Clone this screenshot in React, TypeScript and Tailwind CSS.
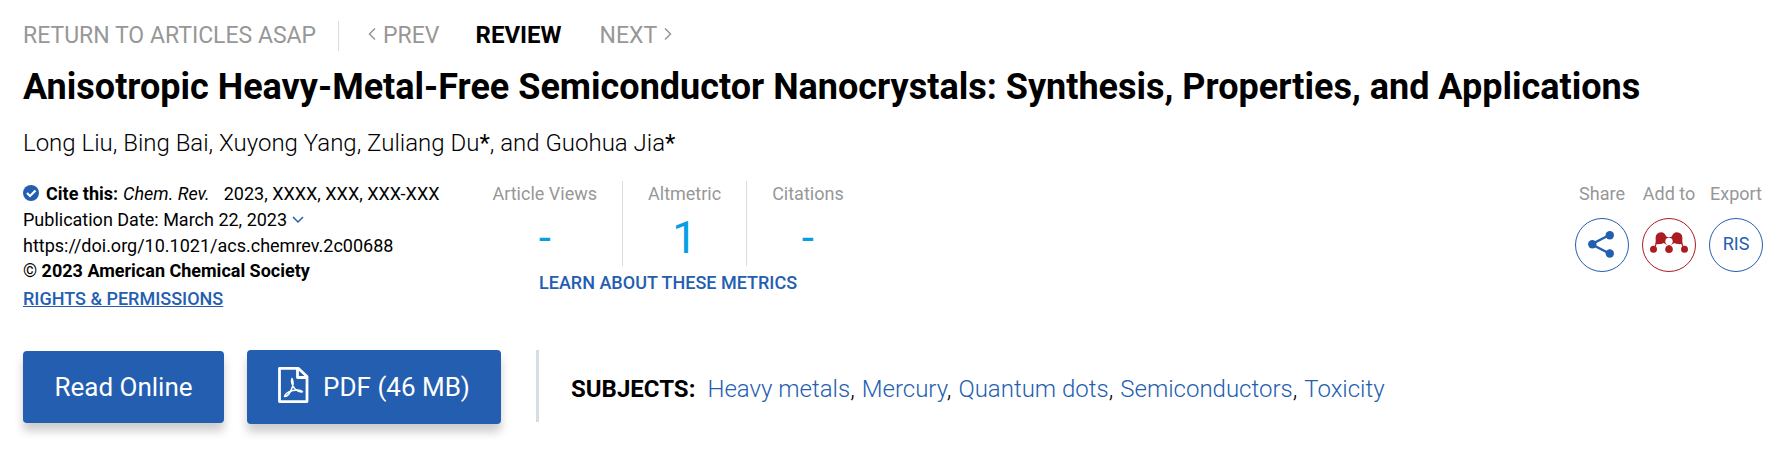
import type { ReactNode } from "react";

const subjects = ["Heavy metals", "Mercury", "Quantum dots", "Semiconductors", "Toxicity"];

const metrics = [
  { label: "Article Views", value: "-" },
  { label: "Altmetric", value: "1" },
  { label: "Citations", value: "-" },
];

function Chevron({ d, className }: { d: string; className: string }) {
  return (
    <svg viewBox="0 0 12 12" className={className} fill="none" stroke="currentColor" strokeWidth="1.5" aria-hidden="true">
      <path d={d} />
    </svg>
  );
}

function ShareIcon() {
  return (
    <svg viewBox="0 0 28 28" className="size-7" fill="currentColor" aria-hidden="true">
      <path d="M21.500 4 3.500 13.200l18 9.300" fill="none" stroke="currentColor" strokeWidth="2.400" />
      <circle cx="4.300" cy="13.200" r="4.200" />
      <circle cx="21.800" cy="4.300" r="4.200" />
      <circle cx="21.800" cy="22.500" r="4.200" />
    </svg>
  );
}

function MendeleyIcon() {
  return (
    <svg viewBox="0 0 38 22" className="mb-1 h-[22px] w-[38px]" fill="currentColor" aria-hidden="true">
      <path d="M8 8 3.500 17.500M30 8l4.500 9.500M19 10v8" fill="none" stroke="currentColor" strokeWidth="1.200" />
      <path d="M11 .2c2.800 0 4.300 1.700 5.200 4.200 1.800 1 3.800 1 5.600 0C22.700 1.900 24.200.2 27 .2a5.500 5.500 0 0 1 5.400 5.500c0 2.300-.4 3.800.4 6-2.500.8-6.300.6-8.300-.7L19 14l-5.500-3c-2 1.300-5.800 1.500-8.300.7.800-2.200.4-3.700.4-6A5.500 5.500 0 0 1 11 .2Z" />
      <circle cx="19" cy="9.500" r="3.700" fill="white" />
      <circle cx="3.500" cy="17.200" r="3.500" />
      <circle cx="19" cy="17.200" r="3.800" />
      <circle cx="34.500" cy="17.200" r="3.500" />
    </svg>
  );
}

function PdfIcon() {
  return (
    <svg viewBox="0 0 31 36" className="mb-1 h-9 w-[31px]" fill="none" stroke="currentColor" strokeWidth="2.800" strokeLinejoin="round" aria-hidden="true">
      <path d="M1.500 1.400h19l8.500 8v25.200h-27.500zM19.500 1.400v9.100h9.500" />
      <path d="M14 11.500c-1.300 2.500.300 7.500 2.800 10.300 2.400 2.400 5 3.500 7.700 3-1.500-1.800-5.500-2-9.500-1.200-4 .9-7.600 3.200-8.500 5.900 2.800.2 6-4.200 7.700-9 1.200-3.300 1-6.800-.2-9Z" strokeWidth="1.500" />
    </svg>
  );
}

function RoundAction({ label, className, children }: { label: string; className: string; children: ReactNode }) {
  return (
    <div className="flex flex-col items-center gap-[11px]">
      <span className="text-[#979797]">{label}</span>
      <button type="button" aria-label={label} className={`flex size-[54px] items-center justify-center rounded-full border ${className}`}>
        {children}
      </button>
    </div>
  );
}

export default function App() {
  return (
    <main className="bg-white pt-[21px] pr-[29px] pb-8 pl-[23px] font-['Roboto',sans-serif] text-black">
      <nav className="flex h-[30px] text-[23px] leading-[30px] text-[#979797]">
        <a href="#" className="border-r border-[#d5dfe3] pr-[22px]">RETURN TO ARTICLES ASAP</a>
        <a href="#" className="ml-[27px] flex gap-[5px]">
          <Chevron d="M9 .5 3.500 6 9 11.500" className="mt-[7px] size-3" />
          PREV
        </a>
        <span className="ml-9 text-2xl leading-7 font-bold text-black">REVIEW</span>
        <a href="#" className="ml-[38px] flex gap-[5px]">
          NEXT
          <Chevron d="M3 .5 8.500 6 3 11.500" className="mt-[7px] size-3" />
        </a>
      </nav>

      <h1 className="mt-[14px] text-4xl leading-11 font-bold">
        Anisotropic Heavy-Metal-Free Semiconductor Nanocrystals: Synthesis, Properties, and Applications
      </h1>
      <p className="mt-[18px] text-2xl leading-8 font-light">
        Long Liu, Bing Bai, Xuyong Yang, Zuliang Du<span className="font-normal">*</span>, and Guohua Jia<span className="font-normal">*</span>
      </p>

      <div className="mt-[22px] flex items-start text-lg leading-[26px]">
        <div>
          <p className="flex items-center">
            <svg viewBox="0 0 16 16" className="mr-[7px] mb-[3px] size-4" aria-hidden="true">
              <circle cx="8" cy="8" r="8" fill="#245eb0" />
              <path d="m4 8 3 3 5.500-5.500" fill="none" stroke="white" strokeWidth="2.200" />
            </svg>
            <span className="font-bold">Cite this:</span>
            <i className="ml-[5px]">Chem. Rev.</i>
            <span className="ml-[14px]">2023, XXXX, XXX, XXX-XXX</span>
          </p>
          <p className="flex items-center">
            Publication Date: March 22, 2023
            <Chevron d="M1 3l5 5 5-5" className="ml-[5px] size-3 text-[#245eb0]" />
          </p>
          <p>https://doi.org/10.1021/acs.chemrev.2c00688</p>
          <p className="leading-6">
            © <span className="font-bold">2023 American Chemical Society</span>
          </p>
          <a href="#" className="mt-[3px] block w-fit font-medium text-[#245eb0] underline">RIGHTS &amp; PERMISSIONS</a>
        </div>

        <div className="ml-7 flex flex-col items-center">
          <dl className="flex divide-x divide-[#d5dfe3]">
            {metrics.map((metric) => (
              <div key={metric.label} className="flex h-[85px] flex-col items-center gap-[5px] px-[25px]">
                <dt className="text-[#979797]">{metric.label}</dt>
                <dd className="text-[44px] leading-[52px] text-[#079fe3]">{metric.value}</dd>
              </div>
            ))}
          </dl>
          <a href="#" className="mt-1 font-medium text-[#245eb0]">LEARN ABOUT THESE METRICS</a>
        </div>

        <div className="ml-auto flex gap-[13px]">
          <RoundAction label="Share" className="border-[#245eb0] text-[#245eb0]"><ShareIcon /></RoundAction>
          <RoundAction label="Add to" className="border-[#ad1b22] text-[#ad1b22]"><MendeleyIcon /></RoundAction>
          <RoundAction label="Export" className="border-[#245eb0] pb-[2px] text-[#245eb0]">RIS</RoundAction>
        </div>
      </div>

      <div className="mt-[38px] flex items-start">
        <button type="button" className="mt-px h-[72px] w-[201px] rounded bg-[#245eb0] text-[26px] text-white shadow-[0_8px_10px_rgba(0,0,0,0.2)]">
          Read Online
        </button>
        <button type="button" className="ml-[23px] flex h-[74px] w-[254px] items-center justify-center gap-[14px] rounded bg-[#245eb0] text-[26px] text-white shadow-[0_8px_10px_rgba(0,0,0,0.2)]">
          <PdfIcon />
          PDF (46 MB)
        </button>
        <div className="ml-[35px] flex h-[72px] items-center gap-3 border-l-3 border-[#d5dfe3] pt-[6px] pl-8 text-2xl">
          <strong className="font-bold">SUBJECTS:</strong>
          <p className="flex gap-[7px] font-light">
            {subjects.map((subject, i) => (
              <span key={subject}>
                <a href="#" className="text-[#245eb0]">{subject}</a>
                {i < subjects.length - 1 && ","}
              </span>
            ))}
          </p>
        </div>
      </div>
    </main>
  );
}
